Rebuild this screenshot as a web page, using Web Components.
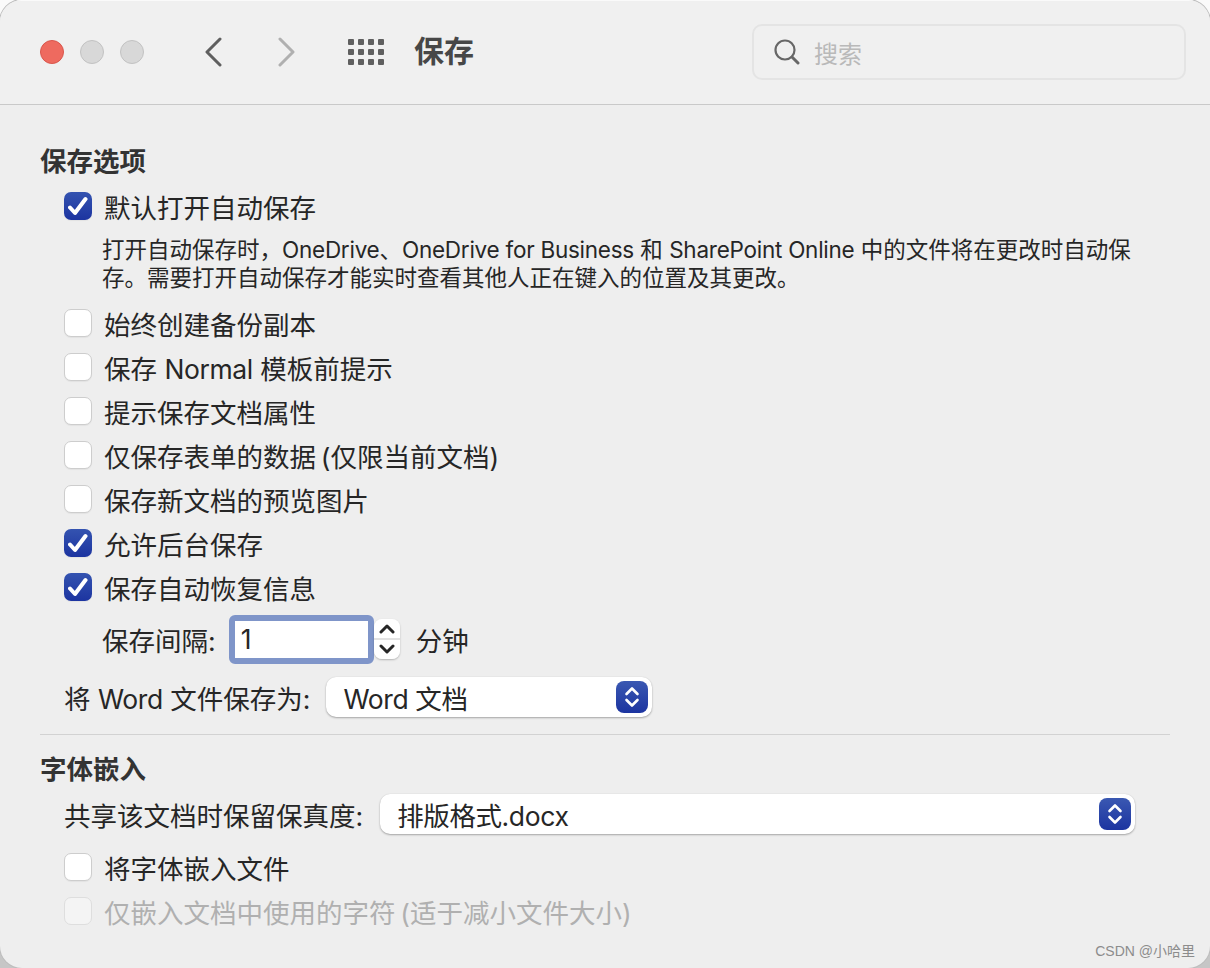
<!DOCTYPE html>
<html lang="zh">
<head>
<meta charset="utf-8">
<title>保存</title>
<style>
    html, body { margin: 0; background: #fff; }
    body { font-family: Inter, "Noto Sans CJK SC", sans-serif; color: #262626; }
    /* the latin runs are a bit tighter than Inter */
    .l { letter-spacing: -0.4px; }
    .n { letter-spacing: -0.25px; }
    .p { letter-spacing: -2.6px; }
</style>
</head>
<body>
<app-window>
    <title-bar slot="top" heading="保存"></title-bar>

    <section-title>保存选项</section-title>
    <pref-check checked>默认打开自动保存</pref-check>
    <pref-note>打开自动保存时，<span class="n">OneDrive</span>、<span class="n">OneDrive for Business</span> 和 <span class="n">SharePoint Online</span> 中的文件将在更改时自动保<br>存。需要打开自动保存才能实时查看其他人正在键入的位置及其更改。</pref-note>
    <pref-check>始终创建备份副本</pref-check>
    <pref-check>保存 <span class="l">Normal</span> 模板前提示</pref-check>
    <pref-check>提示保存文档属性</pref-check>
    <pref-check>仅保存表单的数据<span class="p"> </span>(仅限当前文档)</pref-check>
    <pref-check>保存新文档的预览图片</pref-check>
    <pref-check checked>允许后台保存</pref-check>
    <pref-check checked>保存自动恢复信息</pref-check>
    <interval-row label="保存间隔:" value="1" unit="分钟"></interval-row>
    <select-row top="6" bottom="0" gap="16" width="326" value="Word 文档"><span>将 <span class="l">Word</span> 文件保存为:</span></select-row>
    <section-rule></section-rule>
    <section-title>字体嵌入</section-title>
    <select-row top="2" bottom="9" gap="17" width="755" value="排版格式.docx"><span>共享该文档时保留保真度:</span></select-row>
    <pref-check>将字体嵌入文件</pref-check>
    <pref-check disabled>仅嵌入文档中使用的字符<span class="p"> </span>(适于减小文件大小)</pref-check>
    <span slot="mark">CSDN @小哈里</span>
</app-window>

<script>
const FONT = 'Inter, "Noto Sans CJK SC", sans-serif';

class AppWindow extends HTMLElement {
    constructor() {
        super();
        this.attachShadow({ mode: 'open' });
        this.shadowRoot.innerHTML = `
            <style>
                :host {
                    display: block;
                    width: 1210px;
                    height: 968px;
                    overflow: hidden;
                    background: linear-gradient(#fafafa 50%, #c6c6c6 50%);
                }
                .frame {
                    position: relative;
                    box-sizing: border-box;
                    height: 968px;
                    background: #eeeeee;
                    border-radius: 22px;
                    overflow: hidden;
                    box-shadow: 0 0 0 1px #bdbdbd;
                }
                .content { padding: 40px 40px 0; }
                .mark {
                    position: absolute;
                    right: 15px;
                    bottom: 8px;
                    font: 14px "Liberation Sans", "Noto Sans CJK SC", sans-serif;
                    color: #8c8c8c;
                }
            </style>
            <div class="frame">
                <slot name="top"></slot>
                <div class="content"><slot></slot></div>
                <div class="mark"><slot name="mark"></slot></div>
            </div>
        `;
    }
}

class TitleBar extends HTMLElement {
    constructor() {
        super();
        this.attachShadow({ mode: 'open' });
        const dots = [];
        [0, 1, 2].forEach(r => [0, 1, 2, 3].forEach(c => {
            dots.push(`<rect x="${c * 10}" y="${r * 10}" width="6" height="6" rx="1"/>`);
        }));
        this.shadowRoot.innerHTML = `
            <style>
                :host {
                    display: flex;
                    align-items: center;
                    box-sizing: border-box;
                    height: 105px;
                    padding: 0 24px 0 40px;
                    background: #f0f0f0;
                    border-bottom: 1px solid #c9c9c9;
                    box-shadow: inset 0 1px 0 #fafafa;
                }
                .lights { display: flex; gap: 16px; }
                .light { width: 24px; height: 24px; box-sizing: border-box; border-radius: 50%; background: #d8d8d8; border: 1px solid #c2c2c2; }
                .light.red { background: #ee6a5f; border-color: #d9564c; }
                svg { display: block; flex: none; }
                .back { margin-left: 60px; }
                .forward { margin-left: 56px; }
                .apps { margin-left: 52px; fill: #5f5f5f; }
                h1 { margin: -6px 0 0 30px; font: 700 30px ${FONT}; color: #474747; flex: 1; }
                .search {
                    display: flex;
                    align-items: center;
                    gap: 14px;
                    box-sizing: border-box;
                    width: 434px;
                    height: 56px;
                    padding-left: 20px;
                    border: 2px solid #e4e4e4;
                    border-radius: 10px;
                    font-size: 24px;
                    color: #b9b9b9;
                }
            </style>
            <div class="lights"><div class="light red"></div><div class="light"></div><div class="light"></div></div>
            <svg class="back" width="18" height="30" viewBox="0 0 18 30" fill="none" stroke="#5f5f5f" stroke-width="3" stroke-linecap="round" stroke-linejoin="round"><path d="M16 2 3 15l13 13"/></svg>
            <svg class="forward" width="18" height="30" viewBox="0 0 18 30" fill="none" stroke="#b0b0b0" stroke-width="3" stroke-linecap="round" stroke-linejoin="round"><path d="M2 2l13 13L2 28"/></svg>
            <svg class="apps" width="36" height="26" viewBox="0 0 36 26">${dots.join('')}</svg>
            <h1>${this.getAttribute('heading')}</h1>
            <div class="search">
                <svg width="26" height="26" viewBox="0 0 26 26" fill="none" stroke="#676767" stroke-width="2.2" stroke-linecap="round"><circle cx="11" cy="11" r="9.5"/><path d="M18 18l6 6" stroke-width="3"/></svg>
                <span>搜索</span>
            </div>
        `;
    }
}

class SectionTitle extends HTMLElement {
    constructor() {
        super();
        this.attachShadow({ mode: 'open' });
        this.shadowRoot.innerHTML = `
            <style>
                :host { display: block; height: 32px; margin-bottom: 7px; font: 700 26.5px/32px ${FONT}; color: #333; }
            </style>
            <slot></slot>
        `;
    }
}

class PrefCheck extends HTMLElement {
    constructor() {
        super();
        this.attachShadow({ mode: 'open' });
        const tick = this.hasAttribute('checked')
            ? '<svg width="20" height="20" viewBox="0 0 20 20" fill="none" stroke="#fff" stroke-width="4" stroke-linecap="round" stroke-linejoin="round"><path d="M2 11.5 7 17 17.5 3"/></svg>'
            : '';
        this.shadowRoot.innerHTML = `
            <style>
                :host {
                    display: flex;
                    align-items: center;
                    gap: 12px;
                    height: 44px;
                    margin-left: 24px;
                    font-size: 26.5px;
                    color: #262626;
                }
                :host([disabled]) { color: #b0b0b0; }
                .box {
                    display: flex;
                    align-items: center;
                    justify-content: center;
                    flex: none;
                    box-sizing: border-box;
                    width: 28px;
                    height: 28px;
                    border-radius: 7px;
                    background: #fff;
                    border: 1px solid #cdcdcd;
                    box-shadow: 0 1px 1px rgba(0, 0, 0, 0.05);
                }
                :host([checked]) .box { background: linear-gradient(#3453b0, #1c34a0); border: none; }
                :host([disabled]) .box { background: #f4f4f4; border-color: #dedede; box-shadow: none; }
            </style>
            <span class="box">${tick}</span>
            <span><slot></slot></span>
        `;
    }
}

class PrefNote extends HTMLElement {
    constructor() {
        super();
        this.attachShadow({ mode: 'open' });
        this.shadowRoot.innerHTML = `
            <style>
                :host {
                    display: block;
                    margin: 0 0 9px 62px;
                    padding-top: 8px;
                    font-size: 22.5px;
                    line-height: 28px;
                    white-space: nowrap;
                    color: #262626;
                }
            </style>
            <slot></slot>
        `;
    }
}

class IntervalRow extends HTMLElement {
    constructor() {
        super();
        this.attachShadow({ mode: 'open' });
        const chevron = d => `<svg width="16" height="10" viewBox="0 0 16 10" fill="none" stroke="#262626" stroke-width="3" stroke-linecap="round" stroke-linejoin="round"><path d="${d}"/></svg>`;
        this.shadowRoot.innerHTML = `
            <style>
                :host {
                    display: flex;
                    align-items: center;
                    height: 60px;
                    margin-left: 62px;
                    font-size: 26.5px;
                    color: #262626;
                }
                .field {
                    box-sizing: border-box;
                    width: 145px;
                    height: 49px;
                    margin-left: 13px;
                    padding-left: 6px;
                    background: #fff;
                    border: 6px solid #7f95c9;
                    border-radius: 6px;
                    line-height: 36px;
                }
                .spin {
                    display: flex;
                    flex-direction: column;
                    align-items: center;
                    justify-content: space-between;
                    box-sizing: border-box;
                    width: 26px;
                    height: 40px;
                    padding: 5px 0;
                    background: linear-gradient(#fff 48%, #e2e2e2 48%, #e2e2e2 52%, #fff 52%);
                    border-radius: 8px;
                    box-shadow: 0 1px 2px rgba(0, 0, 0, 0.25);
                }
                svg { display: block; }
                .unit { margin-left: 16px; }
            </style>
            <span>${this.getAttribute('label')}</span>
            <div class="field">${this.getAttribute('value')}</div>
            <div class="spin">
                ${chevron('M2 8 8 2l6 6')}
                ${chevron('M2 2l6 6 6-6')}
            </div>
            <span class="unit">${this.getAttribute('unit')}</span>
        `;
    }
}

class SelectRow extends HTMLElement {
    constructor() {
        super();
        this.attachShadow({ mode: 'open' });
        this.shadowRoot.innerHTML = `
            <style>
                :host {
                    display: flex;
                    align-items: center;
                    gap: ${this.getAttribute('gap')}px;
                    height: 44px;
                    margin: ${this.getAttribute('top')}px 0 ${this.getAttribute('bottom')}px 24px;
                    font-size: 26.5px;
                    color: #262626;
                }
                .menu {
                    display: flex;
                    align-items: center;
                    justify-content: space-between;
                    box-sizing: border-box;
                    width: ${this.getAttribute('width')}px;
                    height: 40px;
                    padding: 0 4px 0 17px;
                    background: #fff;
                    border-radius: 10px;
                    box-shadow: 0 1px 2px rgba(0, 0, 0, 0.3), 0 0 1px rgba(0, 0, 0, 0.12);
                    letter-spacing: -0.38px;
                }
                .arrows {
                    display: flex;
                    align-items: center;
                    justify-content: center;
                    width: 32px;
                    height: 32px;
                    border-radius: 8px;
                    background: linear-gradient(#3a58b2, #1c34a0);
                }
                svg { display: block; }
            </style>
            <slot></slot>
            <div class="menu">
                <span>${this.getAttribute('value')}</span>
                <span class="arrows">
                    <svg width="16" height="24" viewBox="0 0 16 24" fill="none" stroke="#fff" stroke-width="2.6" stroke-linecap="round" stroke-linejoin="round"><path d="M2.5 9 8 3.5 13.5 9M2.5 15 8 20.5 13.5 15"/></svg>
                </span>
            </div>
        `;
    }
}

class SectionRule extends HTMLElement {
    constructor() {
        super();
        this.attachShadow({ mode: 'open' });
        this.shadowRoot.innerHTML = `
            <style>
                :host { display: block; height: 1px; width: 1130px; margin: 15px 0 18px; background: #d2d2d2; }
            </style>
        `;
    }
}

customElements.define('app-window', AppWindow);
customElements.define('title-bar', TitleBar);
customElements.define('section-title', SectionTitle);
customElements.define('pref-check', PrefCheck);
customElements.define('pref-note', PrefNote);
customElements.define('interval-row', IntervalRow);
customElements.define('select-row', SelectRow);
customElements.define('section-rule', SectionRule);
</script>
</body>
</html>
